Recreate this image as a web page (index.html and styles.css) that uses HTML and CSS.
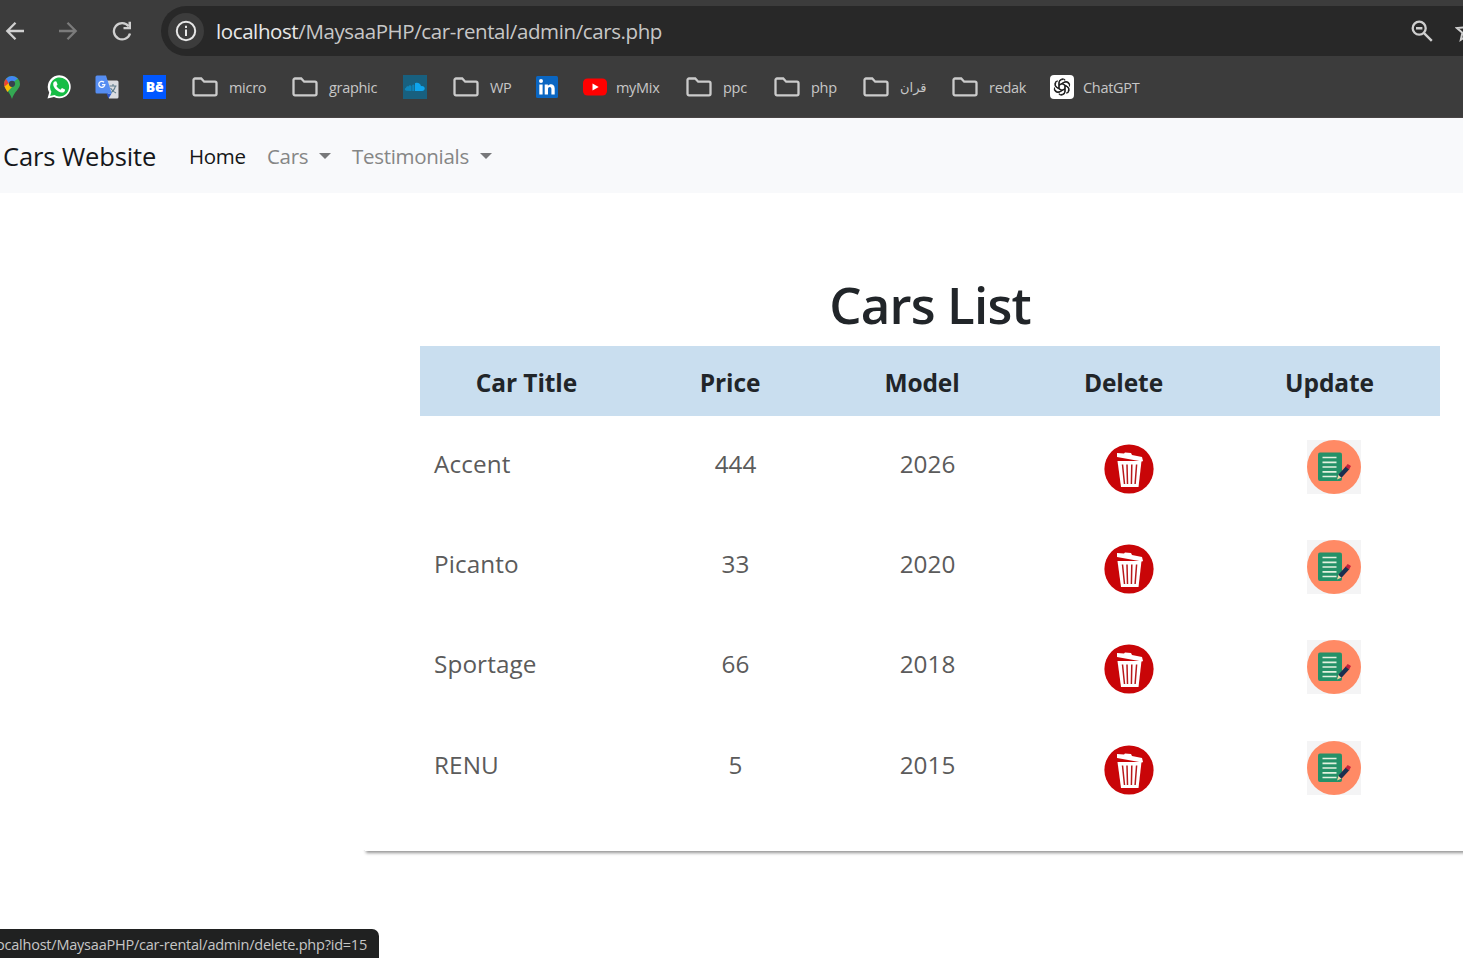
FILE: index.html
```
<!DOCTYPE html>
<html lang="en">
<head>
<meta charset="utf-8">
<title>Cars List</title>
<link rel="stylesheet" href="styles.css">
</head>
<body>
<svg class="defs" aria-hidden="true">
  <symbol id="folder" viewBox="0 0 26 20">
    <path d="M3 1.500h6.200l3 3.200H23a1.500 1.500 0 0 1 1.500 1.500v10.600a1.500 1.500 0 0 1-1.500 1.500H3a1.500 1.500 0 0 1-1.500-1.500V3A1.500 1.500 0 0 1 3 1.500z" fill="none" stroke="#cbcbcb" stroke-width="2.300"/>
  </symbol>
  <symbol id="trash" viewBox="0 0 50 50">
    <circle cx="25" cy="25" r="24.600" fill="#c90508"/>
    <path d="M13 9l7 .5 1-1 6 .5 1 2 10 2 1 4-1 .6-25-4.700z" fill="#fff"/>
    <path d="M13.500 17h24l-3 26H17z" fill="#fff"/>
    <path d="M18.500 20.500l2 19.500M23 20.500l.5 19.500M27.800 20.500l-.4 19.500M32.600 20.500l-1.500 19.500" stroke="#b8191b" stroke-width="1.500" fill="none"/>
  </symbol>
  <symbol id="edit" viewBox="0 0 54 54">
    <path fill="#f4f4f5" d="M0 0h54v54H0z"/>
    <circle cx="27" cy="27" r="27" fill="#ff8a65"/>
    <rect x="11" y="12.500" width="24" height="28.500" rx="2" fill="#259168"/>
    <path d="M15.500 17.500h14M15.500 22.300h14M15.500 27h14M15.500 31.800h14M15.500 36.500h14" stroke="#e3f1df" stroke-width="1.700"/>
    <path d="M30 39.500l1.800-5.500 3.500 3.300z" fill="#f3d2a2"/>
    <path d="M31.300 34.800l8-8.800 3.200 3-8 8.800z" fill="#1b2f4f"/>
    <path d="M38.500 26.800l2.200-2.800 3.300 2-2 3.400z" fill="#c4203c"/>
  </symbol>
</svg>

<header class="browser">
  <div class="toolbar">
    <svg class="nav-icon back" viewBox="0 0 20 20"><path d="M19 10H2.500M10.500 1.800L2.300 10l8.200 8.200" fill="none" stroke="#d0d0d0" stroke-width="2.300"/></svg>
    <svg class="nav-icon forward" viewBox="0 0 20 20"><path d="M1 10h16.500M9.500 1.800L17.700 10l-8.200 8.200" fill="none" stroke="#7b7b7b" stroke-width="2.300"/></svg>
    <svg class="nav-icon reload" viewBox="0 0 20 20"><path d="M16.600 5.200A8.200 8.200 0 1 0 18 12.500" fill="none" stroke="#d0d0d0" stroke-width="2.300"/><path d="M19 .8v7.500h-7.500V6.100h5V.8z" fill="#d0d0d0"/></svg>
    <div class="omnibox">
      <span class="site-info"><svg viewBox="0 0 22 22"><circle cx="11" cy="11" r="9.200" fill="none" stroke="#e6e6e6" stroke-width="2"/><path d="M11 9.500v6.500M11 5.800v2.200" stroke="#e6e6e6" stroke-width="2"/></svg></span>
      <span class="url"><b>localhost</b>/MaysaaPHP/car-rental/admin/cars.php</span>
      <svg class="zoom-icon" viewBox="0 0 22 22"><circle cx="8.200" cy="8.200" r="6.500" fill="none" stroke="#cecece" stroke-width="2.300"/><path d="M5 8.200h6.400M12.800 12.800l8 8" stroke="#cecece" stroke-width="2.400"/></svg>
      <svg class="star-icon" viewBox="0 0 24 24"><path d="M12 2l2.900 6.500 7.100.6-5.400 4.700 1.600 7L12 17l-6.200 3.800 1.600-7L2 9.100l7.100-.6z" fill="none" stroke="#cecece" stroke-width="2"/></svg>
    </div>
  </div>
  <nav class="bookmarks">
    <a><svg viewBox="0 0 24 24"><path d="M4 9a8 8 0 0 1 16 0c0 5-5.500 7-8 15C9.500 16 4 14 4 9z" fill="#34a853"/><path d="M4 9q0-3 2.200-5.500L12 8.500 6 14Q4 11.500 4 9z" fill="#ea4335"/><path d="M6 3.700A8 8 0 0 1 17.800 3.500L9.800 10z" fill="#4285f4"/><path d="M4.500 11.500L9 8l3 4-4.700 5z" fill="#fbbc04"/><circle cx="12" cy="8.800" r="3.100" fill="#37404e"/></svg></a>
    <a><svg viewBox="0 0 24 24"><path d="M.5 23.500l1.700-6.100A11.500 11.500 0 1 1 7 22z" fill="#fff"/><path d="M3.200 21l1.200-4.200A9.500 9.500 0 1 1 7.500 20z" fill="#16bd45"/><path d="M8 6.200l1.400.2 1.200 3-1.200 1.600q1.400 2.600 4 3.700l1.600-1.700 3 1.400c.2 2.300-1.500 3.300-3.300 3.100-4-.5-8.700-5-8.500-8.600.1-1.200.8-2.200 1.800-2.700z" fill="#fff"/></svg></a>
    <a><svg viewBox="0 0 24 24"><path d="M10 5.500h12a1.500 1.500 0 0 1 1.500 1.500v15a1.500 1.500 0 0 1-1.500 1.500h-8z" fill="#dadce0"/><path d="M14.500 11h7M18 9v2M20.500 11q-1.500 5-5 7M15.500 13q2 3.500 5.500 5" fill="none" stroke="#607d8b" stroke-width="1.100"/><path d="M11.500 18.500h5l-3 5z" fill="#2b55c7"/><path d="M2 .5h9l5.800 18H2A1.500 1.500 0 0 1 .5 17V2A1.500 1.500 0 0 1 2 .5z" fill="#558df2"/><path d="M9 7.300A3 3 0 1 0 9.800 9.700H7" fill="none" stroke="#f4f7ff" stroke-width="1.300"/></svg></a>
    <a><span class="behance">Bē</span></a>
    <a class="folder"><svg><use href="#folder"/></svg><span>micro</span></a>
    <a class="folder"><svg><use href="#folder"/></svg><span>graphic</span></a>
    <a><svg viewBox="0 0 24 24"><path fill="#18607f" d="M0 0h24v24H0z"/><path d="M3 15.800c-1.700-.5-1.500-2.800 0-3 .2-1.500 1.500-2 2.500-1.300.3-1.300 2-1.800 3-.5V16zM9.200 10q1.300-.8 2.200 0v6H9.200z" fill="#0e85bb"/><path d="M12 8.200c3-1.200 5.600.5 6 3 4.500-.8 5 4.800 1.200 4.800H12z" fill="#0ea5ee"/></svg></a>
    <a class="folder"><svg><use href="#folder"/></svg><span>WP</span></a>
    <a><svg class="linkedin" viewBox="0 0 22 22"><rect width="22" height="22" rx="1.500" fill="#0a66c2"/><circle cx="5" cy="5" r="2" fill="#fff"/><path d="M3.300 8.500h3.300v10H3.300zM8.700 8.500h3.200v1.400c2-2.600 6.800-2 6.800 2.700v5.900h-3.300v-5.400c0-3-3.400-2.700-3.400 0v5.400H8.700z" fill="#fff"/></svg></a>
    <a class="site"><svg viewBox="0 0 24 24"><rect y="3.500" width="24" height="17" rx="4.500" fill="#f00"/><path d="M9.500 8.500v7l6.200-3.500z" fill="#fff"/></svg><span>myMix</span></a>
    <a class="folder"><svg><use href="#folder"/></svg><span>ppc</span></a>
    <a class="folder"><svg><use href="#folder"/></svg><span>php</span></a>
    <a class="folder"><svg><use href="#folder"/></svg><span class="arabic" lang="ar">قران</span></a>
    <a class="folder"><svg><use href="#folder"/></svg><span>redak</span></a>
    <a class="site"><svg viewBox="0 0 24 24"><rect width="24" height="24" rx="4" fill="#fff"/><g fill="none" stroke="#222" stroke-width="1.200"><path id="petal" d="M9 13.700V7.500a3.500 3.500 0 0 1 6.200-2.200M9 10.300l5-2.900a3.600 3.600 0 0 1 5 1.800"/><use href="#petal" transform="rotate(60 12 12)"/><use href="#petal" transform="rotate(120 12 12)"/><use href="#petal" transform="rotate(180 12 12)"/><use href="#petal" transform="rotate(240 12 12)"/><use href="#petal" transform="rotate(300 12 12)"/></g></svg><span>ChatGPT</span></a>
  </nav>
</header>

<nav class="navbar">
  <a class="brand">Cars Website</a>
  <a class="link active">Home</a>
  <a class="link cars dropdown">Cars</a>
  <a class="link testimonials dropdown">Testimonials</a>
</nav>

<main class="card">
  <h1><span>Cars List</span></h1>
  <table>
    <colgroup><col class="c-title"><col class="c-price"><col class="c-model"><col class="c-delete"><col class="c-update"></colgroup>
    <thead><tr><th>Car Title</th><th>Price</th><th>Model</th><th>Delete</th><th>Update</th></tr></thead>
    <tbody>
      <tr><td>Accent</td><td>444</td><td>2026</td><td class="action-delete"><svg class="trash"><use href="#trash"/></svg></td><td class="action-update"><svg class="edit"><use href="#edit"/></svg></td></tr>
      <tr><td>Picanto</td><td>33</td><td>2020</td><td class="action-delete"><svg class="trash"><use href="#trash"/></svg></td><td class="action-update"><svg class="edit"><use href="#edit"/></svg></td></tr>
      <tr><td>Sportage</td><td>66</td><td>2018</td><td class="action-delete"><svg class="trash"><use href="#trash"/></svg></td><td class="action-update"><svg class="edit"><use href="#edit"/></svg></td></tr>
      <tr><td>RENU</td><td>5</td><td>2015</td><td class="action-delete"><svg class="trash"><use href="#trash"/></svg></td><td class="action-update"><svg class="edit"><use href="#edit"/></svg></td></tr>
    </tbody>
  </table>
</main>
<div class="status">localhost/MaysaaPHP/car-rental/admin/delete.php?id=15</div>
</body>
</html>
```
FILE: styles.css
```
* { box-sizing: border-box; }
body {
  margin: 0;
  height: 958px;
  overflow: hidden;
  background: #fff;
  color: #212529;
  font-family: "Open Sans", "Noto Sans", sans-serif;
}
svg { display: block; flex: none; }
.defs { position: absolute; width: 0; height: 0; }

/* browser chrome */
.browser { height: 118px; padding-top: 6px; background: #3c3c3c; border-bottom: 1px solid #484444; }
.toolbar { display: flex; align-items: center; height: 50px; }
.nav-icon { width: 20px; height: 20px; }
.back { margin-left: 5px; }
.forward { margin-left: 33px; }
.reload { margin-left: 34px; }
.omnibox {
  display: flex;
  flex: 1;
  align-items: center;
  height: 50px;
  min-width: 0;
  margin-left: 29px;
  padding-left: 7px;
  overflow: hidden;
  border-radius: 25px 0 0 25px;
  background: #282828;
}
.site-info { display: flex; flex: none; align-items: center; justify-content: center; width: 36px; height: 36px; border-radius: 50%; background: #3c3c3c; }
.site-info svg { width: 22px; height: 22px; }
.url { flex: none; width: 1195px; margin-left: 12px; color: #c7c7c7; font-size: 20.5px; letter-spacing: -0.4px; white-space: nowrap; }
.url b { color: #e8e8e8; font-weight: 400; }
.zoom-icon { width: 22px; height: 22px; }
.star-icon { width: 24px; height: 24px; margin-left: 22px; }

.bookmarks {
  display: grid;
  grid-template-columns: 47px 48px 48px 49px 100px 111px 50px 83px 47px 103px 88px 89px 89px 98px 100px;
  align-items: center;
  height: 62px;
  color: #c7c7c7;
  font-size: 14.5px;
  letter-spacing: -0.3px;
}
.bookmarks a { display: flex; align-items: center; white-space: nowrap; }
.bookmarks svg { width: 24px; height: 24px; }
.bookmarks .linkedin { width: 22px; height: 22px; }
.bookmarks .folder { gap: 11px; }
.bookmarks .folder svg { width: 26px; height: 20px; }
.site { gap: 9px; }
.arabic { font-family: "DejaVu Sans", sans-serif; font-size: 13px; }
.behance { width: 23px; height: 24px; background: #0057ff; color: #fff; font-size: 14px; font-weight: 800; line-height: 23px; text-align: center; }

/* page navigation */
.navbar { display: flex; align-items: center; height: 75px; background: #f8f9fb; padding-left: 3px; }
.brand { width: 186px; font-size: 25.5px; letter-spacing: -0.15px; color: #15171a; }
.link { display: flex; align-items: center; color: #858686; font-size: 20.5px; letter-spacing: -0.3px; }
.active { width: 78px; color: #151617; }
.cars { width: 85px; }
.dropdown::after { content: ""; margin-left: 11px; border: 6px solid transparent; border-top-color: #77787a; border-bottom: 0; }

/* list: only the lower edge of the card casts a shadow */
.card { width: 1140px; height: 658px; margin-left: 365px; padding: 76px 0 0 55px; box-shadow: 0 3px 3px -1px rgba(0, 0, 0, .42); clip-path: inset(650px 0 -10px -4px); clip-path: polygon(4px 0, 100% 0, 100% 670px, -4px 670px, -4px 657px, 4px 657px); }
h1 { display: flex; justify-content: center; width: 1020px; height: 77px; margin: 0; font-size: 51px; font-weight: 600; line-height: 71px; letter-spacing: -0.8px; }
table { width: 1020px; table-layout: fixed; border-spacing: 0; }
.c-title { width: 224px; }
.c-price { width: 183px; }
.c-model { width: 201px; }
.c-delete { width: 202px; }
.c-update { width: 210px; }
th { height: 70px; padding: 3px 11px 1px 0; background: #c9deef; font-size: 24.5px; font-weight: 700; letter-spacing: -0.1px; }
td { height: 100.4px; padding: 0 0 6px; color: #5b5b5b; font-size: 24.3px; text-align: center; }
td:first-child { padding-left: 14px; text-align: left; letter-spacing: 0.1px; }
td.action-delete { padding: 5px 0 0; }
td.action-update { padding: 1px 2px 0 0; }
td svg { margin: auto; }
.trash { width: 50px; height: 50px; }
.edit { width: 54px; height: 54px; }

.status {
  position: absolute;
  bottom: 0;
  left: 0;
  display: flex;
  align-items: center;
  justify-content: flex-end;
  width: 379px;
  height: 29px;
  padding: 2px 12px 0 0;
  overflow: hidden;
  border-radius: 0 7px 0 0;
  background: #202121;
  color: #c7c7c7;
  font-size: 14.5px;
  letter-spacing: -0.22px;
  white-space: nowrap;
}
```
